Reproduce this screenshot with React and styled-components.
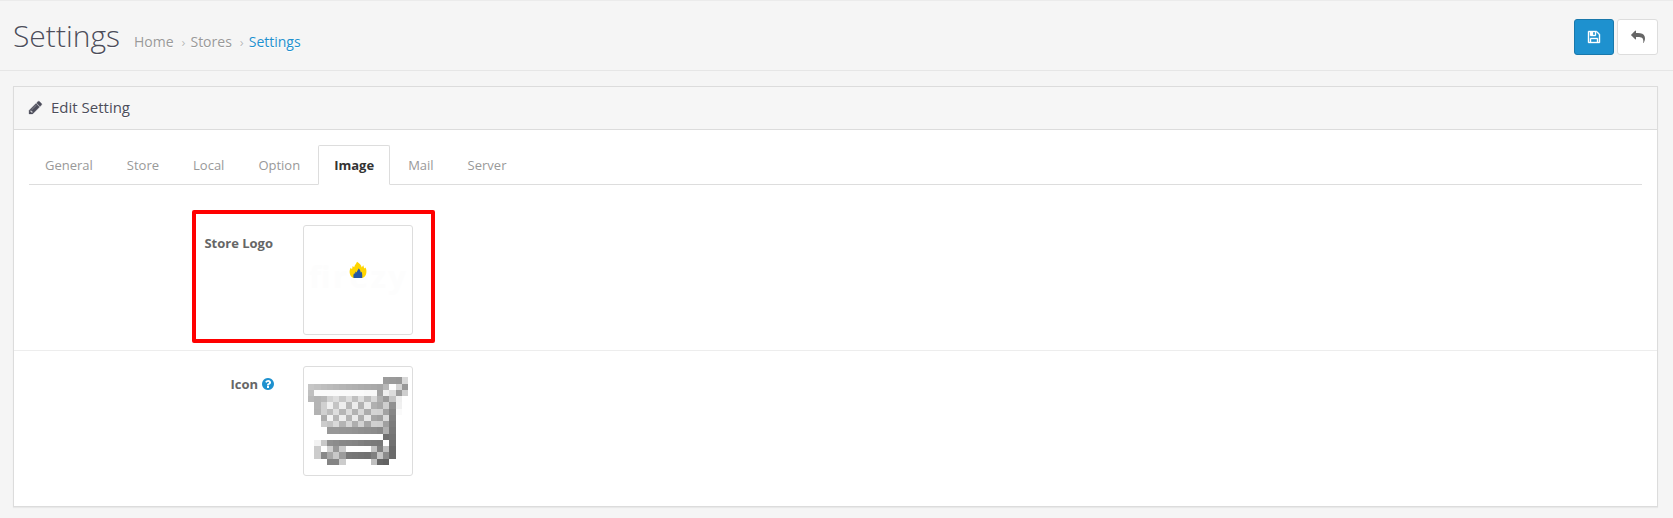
import React from "react";
import styled, { createGlobalStyle } from "styled-components";

const GlobalStyle = createGlobalStyle`
  * { box-sizing: border-box; }
  body {
    margin: 0;
    background: #f5f5f5;
    color: #666;
    font-family: "Open Sans", "Noto Sans", sans-serif;
    font-size: 13px;
    line-height: 1.42857;
  }
`;

const Page = styled.div`
  height: 518px;
  border-top: 1px solid #ebebeb;
  overflow: hidden;
`;

const PageHeader = styled.header`
  display: flex;
  justify-content: space-between;
  height: 70px;
  padding: 17px 15px 0 13px;
  border-bottom: 1px solid #e6e6e6;
`;

const TitleGroup = styled.div`
  display: flex;
  align-items: baseline;
  height: 36px;
  text-shadow: 0 1px #fff;
`;

const Title = styled.h1`
  margin: 0;
  font-size: 30px;
  font-weight: 300;
  line-height: 36px;
  color: #4c4d5a;
`;

const Breadcrumb = styled.nav`
  display: flex;
  margin-left: 14px;
  font-size: 14px;
  line-height: 20px;
`;

const Crumb = styled.a`
  color: ${(p) => (p.$active ? "#1e91cf" : "#999")};
  &:not(:first-child)::before {
    content: "›";
    padding: 0 5px 0 8px;
    font-size: 13px;
    color: #bbb;
  }
`;

const Actions = styled.div`
  display: flex;
  gap: 3px;
  padding-top: 1px;
`;

const Button = styled.button`
  display: flex;
  align-items: center;
  justify-content: center;
  width: ${(p) => (p.$primary ? 40 : 41)}px;
  height: 36px;
  padding: 0;
  border: 1px solid ${(p) => (p.$primary ? "#1978ab" : "#ddd")};
  border-radius: 3px;
  background: ${(p) => (p.$primary ? "#1e91cf" : "#fff")};
  color: ${(p) => (p.$primary ? "#fff" : "#666")};
`;

const Panel = styled.section`
  margin: 15px 15px 0 13px;
  border: 1px solid #dcdcdc;
  background: #fff;
  box-shadow: 0 1px 1px rgba(0, 0, 0, 0.05);
`;

const PanelHeading = styled.div`
  display: flex;
  align-items: center;
  gap: 8px;
  height: 43px;
  padding: 0 15px 2px 14px;
  border-bottom: 1px solid #dcdcdc;
  background: #f6f6f6;
  color: #4c4d5a;
`;

const PanelTitle = styled.h3`
  margin: 0;
  font-size: 15px;
  font-weight: 400;
  line-height: 17px;
  text-shadow: 0 1px #fff;
`;

const PanelBody = styled.div`
  padding: 15px 0;
`;

const Tabs = styled.div`
  display: flex;
  height: 40px;
  margin: 0 15px 25px;
  border-bottom: 1px solid #ddd;
`;

const Tab = styled.a`
  height: 40px;
  margin-right: 2px;
  padding: 10px 15px;
  border: 1px solid ${(p) => (p.$active ? "#ddd" : "transparent")};
  border-bottom-color: ${(p) => (p.$active ? "#fff" : "transparent")};
  border-radius: 2px 2px 0 0;
  color: ${(p) => (p.$active ? "#333" : "#999")};
  font-weight: ${(p) => (p.$active ? 700 : 400)};
`;

const FormGroup = styled.div`
  position: relative;
  display: flex;
  padding: 15px 0;
  & + & { border-top: 1px solid #ededed; }
`;

const Label = styled.label`
  display: flex;
  justify-content: flex-end;
  gap: 3px;
  width: 289px;
  padding: 9px 30px 0 0;
  flex: none;
  font-weight: 700;
  white-space: nowrap;
`;

const HelpIcon = styled.span`
  display: flex;
  align-items: center;
  height: 18px;
  margin-right: -2px;
  color: #1e91cf;
`;

const Thumbnail = styled.a`
  display: block;
  width: 110px;
  height: 110px;
  padding: 4px;
  border: 1px solid #ddd;
  border-radius: 3px;
  background: #fff;
`;

const Highlight = styled.div`
  position: absolute;
  left: 178px;
  top: 0;
  width: 243px;
  height: 133px;
  border: 4px solid #f00;
  border-radius: 2px;
`;

const Glyph = styled.svg`
  display: block;
  fill: currentColor;
`;

const ICONS = {
  save: "M512 1536h768v-384h-768v384zm896 0h128v-896q0-14-10-38.5t-20-34.5l-281-281q-10-10-34-20t-39-10v416q0 40-28 68t-68 28h-576q-40 0-68-28t-28-68v-416h-128v1280h128v-416q0-40 28-68t68-28h832q40 0 68 28t28 68v416zm-384-928v-320q0-13-9.5-22.5t-22.5-9.5h-192q-13 0-22.5 9.5t-9.5 22.5v320q0 13 9.5 22.5t22.5 9.5h192q13 0 22.5-9.5t9.5-22.5zm640 32v928q0 40-28 68t-68 28h-1344q-40 0-68-28t-28-68v-1344q0-40 28-68t68-28h928q40 0 88 20t76 48l280 280q28 28 48 76t20 88z",
  reply: "M1792 1120q0 166-127 451-3 7-10.5 24t-13.5 30-13 22q-12 17-28 17-15 0-23.5-10t-8.5-25q0-9 2.5-26.5t2.5-23.5q5-68 5-123 0-101-17.5-181t-48.5-138.5-80-101-105.5-69.5-133-42.5-154-21.5-175.5-6h-224v256q0 26-19 45t-45 19-45-19l-512-512q-19-19-19-45t19-45l512-512q19-19 45-19t45 19 19 45v256h224q713 0 875 403 53 134 53 333z",
  pencil: "M491 1536l91-91-235-235-91 91v107h128v128h107zm523-928q0-22-22-22-10 0-17 7l-542 542q-7 7-7 17 0 22 22 22 10 0 17-7l542-542q7-7 7-17zm-54-192l416 416-832 832h-416v-416zm683 96q0 53-37 90l-166 166-416-416 166-165q36-38 90-38 53 0 91 38l235 234q37 39 37 91z",
  help: "M1024 1376v-192q0-14-9-23t-23-9h-192q-14 0-23 9t-9 23v192q0 14 9 23t23 9h192q14 0 23-9t9-23zm256-672q0-88-55.5-163t-138.5-116-170-41q-243 0-371 213-15 24 8 42l132 100q7 6 19 6 16 0 25-12 53-68 86-92 34-24 86-24 48 0 85.5 26t37.5 59q0 38-20 61t-68 45q-63 28-115.5 86.5t-52.5 125.5v36q0 14 9 23t23 9h192q14 0 23-9t9-23q0-19 21.5-49.5t54.5-49.5q32-18 49-28.5t46-35 44.5-48 28-60.5 12.5-81zm384 192q0 209-103 385.5t-279.5 279.5-385.5 103-385.5-103-279.5-279.5-103-385.5 103-385.5 279.5-279.5 385.5-103 385.5 103 279.5 279.5 103 385.5z",
};

const Icon = ({ name, size = 13, weight = 0 }) => (
  <Glyph width={size} height={size} viewBox="0 0 1792 1792" aria-hidden="true">
    <path d={ICONS[name]} stroke="currentColor" strokeWidth={weight} />
  </Glyph>
);

// Grey level of each of the 16x16 cart pixels; ".." is an empty pixel.
const CART = [
  ".. .. .. .. .. .. .. .. .. .. .. .. .. .. .. ..",
  ".. .. .. .. .. .. .. .. .. .. .. .. 9c 9a 98 d8",
  "c6 c2 be bb b8 b5 b2 b0 ad ab a9 a6 b8 fd d4 98",
  "c0 fa fa fa fa fa fa fa fa f8 f8 a2 ee dc 9c ce",
  "b9 b4 b8 d2 de c8 de c0 de bc d8 b0 9a c4 ee ..",
  ".. b4 d0 f0 c4 ee b8 ec b2 e8 b0 a8 ce 90 f0 ..",
  ".. b2 d0 bc de b6 dc b2 d8 ac d4 d2 a2 86 fa ..",
  ".. .. ac f4 b8 ee b4 ea ae e8 a6 a0 da 80 .. ..",
  ".. .. cc c4 da b4 d6 ae d2 a6 d0 ce a0 7c .. ..",
  ".. .. .. 98 98 96 95 93 90 8e 8c 88 b0 78 .. ..",
  ".. .. .. .. .. .. .. .. .. .. .. .. 70 74 .. ..",
  ".. f2 c8 90 8c 88 86 84 80 7c 7a 78 fe 70 .. ..",
  ".. cc .. d0 98 cc .. .. .. .. c4 80 c0 6a .. ..",
  ".. cc 88 a8 c8 9c 78 76 74 72 80 c6 8c 6a .. ..",
  ".. .. .. 84 84 cc .. .. .. .. c0 66 62 .. .. ..",
  ".. .. .. .. .. .. .. .. .. .. .. .. .. .. .. ..",
].map((row) => row.split(" "));

const CartImage = () => (
  <Glyph width="100" height="100" viewBox="0 0 16 16" shapeRendering="crispEdges">
    {CART.flatMap((row, y) =>
      row.map((level, x) =>
        level === ".." ? null : (
          <rect key={`${x}-${y}`} x={x} y={y} width="1" height="1" fill={`#${level}${level}${level}`} />
        )
      )
    )}
  </Glyph>
);

const WordMark = styled.text`
  fill: #fdfdfd;
  font-size: 31px;
  font-weight: 700;
`;

const LogoImage = () => (
  <Glyph width="100" height="100" viewBox="0 0 100 100">
    <WordMark x="1" y="58" textLength="97">firezy</WordMark>
    <path
      fill="#ffd500"
      d="M49 31.800C51.500 33.200 53.300 35 53.700 37.500L55.300 35.300 56.200 38.500 57.500 37.500C58.600 39.500 58.500 41 58.300 43 58 45.500 56.500 47.300 54.300 48H45.500C43.500 47.300 42 45.500 41.700 43 41.500 41 41.800 39.500 42.700 37.800L44 39.300 44.700 36 46.200 37.300C46.500 35 48.300 34.300 49 31.800z"
    />
    <path
      fill="#2456a6"
      d="M50.600 38.600C52 39.700 52.600 41 52.700 42.600L53.600 41.800C54.300 43.500 54.500 46 54.100 48H45.700C45.100 46.300 45.300 44.500 46.200 43L47 44.200 47.500 41.500 48.700 42.500C48.700 41 50.200 40.200 50.600 38.600z"
    />
  </Glyph>
);

const TAB_NAMES = ["General", "Store", "Local", "Option", "Image", "Mail", "Server"];

export default function App() {
  return (
    <Page>
      <GlobalStyle />
      <PageHeader>
        <TitleGroup>
          <Title>Settings</Title>
          <Breadcrumb>
            <Crumb>Home</Crumb>
            <Crumb>Stores</Crumb>
            <Crumb $active>Settings</Crumb>
          </Breadcrumb>
        </TitleGroup>
        <Actions>
          <Button $primary aria-label="Save"><Icon name="save" size={14} weight={50} /></Button>
          <Button aria-label="Back"><Icon name="reply" size={14} /></Button>
        </Actions>
      </PageHeader>
      <Panel>
        <PanelHeading>
          <Icon name="pencil" size={15} weight={40} />
          <PanelTitle>Edit Setting</PanelTitle>
        </PanelHeading>
        <PanelBody>
          <Tabs>
            {TAB_NAMES.map((name) => (
              <Tab key={name} $active={name === "Image"}>{name}</Tab>
            ))}
          </Tabs>
          <FormGroup>
            <Label>Store Logo</Label>
            <Thumbnail><LogoImage /></Thumbnail>
            <Highlight />
          </FormGroup>
          <FormGroup>
            <Label>
              Icon
              <HelpIcon><Icon name="help" size={14} /></HelpIcon>
            </Label>
            <Thumbnail><CartImage /></Thumbnail>
          </FormGroup>
        </PanelBody>
      </Panel>
    </Page>
  );
}
